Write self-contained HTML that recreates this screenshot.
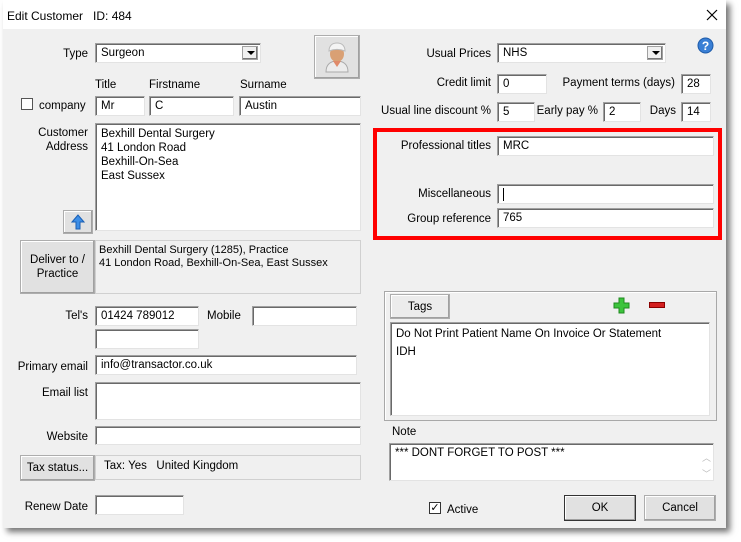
<!DOCTYPE html>
<html><head><meta charset="utf-8"><style>
*{box-sizing:border-box;margin:0;padding:0}
body{width:741px;height:542px;background:#fff;position:relative;overflow:hidden;font-family:"Liberation Sans",sans-serif;font-size:11.5px;color:#000}
.win{position:absolute;left:3px;top:0;width:723px;height:528px;background:#f0f0f0;box-shadow:4px 4px 6px rgba(0,0,0,.55)}
.tb{position:absolute;left:3px;top:0;width:723px;height:29px;background:#fff}
.a{position:absolute;white-space:nowrap}
.l{margin-top:2px}
.r{text-align:right}
.in{position:absolute;background:#fff;border:1px solid #a0a0a0;border-right-color:#e3e3e3;border-bottom-color:#e3e3e3;box-shadow:inset 1px 1px 0 #696969;padding:3px 5px 0;white-space:nowrap}
.btn{position:absolute;background:#e1e1e1;border:1px solid #adadad;box-shadow:inset -1px -1px 0 #a0a0a0,inset 1px 1px 0 #fff;text-align:center;display:flex;align-items:center;justify-content:center}
.gb{position:absolute;background:#f0f0f0;border:1px solid #d0d0d0}
.dd{position:absolute;right:2px;top:2px;width:16px;height:14px;background:#f0f0f0;border:1px solid #a0a0a0;box-shadow:inset -1px -1px 0 #777}
.dd:after{content:"";position:absolute;left:4px;top:4px;border-left:4px solid transparent;border-right:4px solid transparent;border-top:4px solid #000}
.cb{position:absolute;width:12px;height:12px;background:#fff;border:1px solid #333}
</style></head><body>
<div class="win"></div>
<div class="tb"></div>
<div class="a" style="left:7px;top:9px;font-size:12px">Edit Customer&nbsp;&nbsp;&nbsp;ID: 484</div>
<svg class="a" style="left:706px;top:9px" width="12" height="12" viewBox="0 0 12 12"><path d="M1 1L11 11M11 1L1 11" stroke="#000" stroke-width="1.2"/></svg>

<!-- left -->
<div class="a r l" style="left:30px;width:58px;top:46px">Type</div>
<div class="in" style="left:95px;top:43px;width:166px;height:20px">Surgeon<div class="dd"></div></div>
<div class="btn" style="left:314px;top:35px;width:46px;height:44px">
<svg width="30" height="32" viewBox="0 0 30 32"><path d="M4 31c0-8 5-11 11-11s11 3 11 11z" fill="#ececec" stroke="#aaa"/><ellipse cx="15" cy="13" rx="7" ry="8" fill="#d9a074"/><path d="M7 10c0-6 4-8 8-8s8 2 8 8c-5-2-11-2-16 0z" fill="#f4f4f4" stroke="#bbb"/><path d="M11 20l4 6 4-6" fill="#e08a6a"/></svg></div>
<div class="a l" style="left:95px;top:77px">Title</div>
<div class="a l" style="left:149px;top:77px">Firstname</div>
<div class="a l" style="left:240px;top:77px">Surname</div>
<div class="cb" style="left:21px;top:98px;border-color:#555"></div>
<div class="a l" style="left:39px;top:98px">company</div>
<div class="in" style="left:95px;top:96px;width:50px;height:20px">Mr</div>
<div class="in" style="left:149px;top:96px;width:85px;height:20px">C</div>
<div class="in" style="left:239px;top:96px;width:122px;height:20px">Austin</div>
<div class="a r l" style="left:20px;width:68px;top:124px;line-height:14px">Customer<br>Address</div>
<div class="in" style="left:95px;top:123px;width:266px;height:108px;line-height:14px;padding-top:3px">Bexhill Dental Surgery<br>41 London Road<br>Bexhill-On-Sea<br>East Sussex</div>
<div class="btn" style="left:63px;top:210px;width:30px;height:24px"><svg width="14" height="16" viewBox="0 0 14 16"><path d="M7 1L1 8h4v7h4V8h4z" fill="#3d8ee6" stroke="#1a5fb4"/></svg></div>
<div class="btn" style="left:20px;top:240px;width:75px;height:54px;line-height:14px">Deliver to /<br>Practice</div>
<div class="gb" style="left:95px;top:240px;width:266px;height:54px;padding:3px 3px;line-height:13px;font-size:11px">Bexhill Dental Surgery (1285), Practice<br>41 London Road, Bexhill-On-Sea, East Sussex</div>
<div class="a r l" style="left:20px;width:68px;top:308px">Tel's</div>
<div class="in" style="left:95px;top:306px;width:104px;height:20px">01424 789012</div>
<div class="a l" style="left:207px;top:308px">Mobile</div>
<div class="in" style="left:252px;top:306px;width:105px;height:20px"></div>
<div class="in" style="left:95px;top:329px;width:104px;height:20px"></div>
<div class="a r l" style="left:5px;width:83px;top:359px">Primary email</div>
<div class="in" style="left:95px;top:355px;width:262px;height:20px">info@transactor.co.uk</div>
<div class="a r l" style="left:20px;width:68px;top:385px">Email list</div>
<div class="in" style="left:95px;top:382px;width:266px;height:38px"></div>
<div class="a r l" style="left:20px;width:68px;top:429px">Website</div>
<div class="in" style="left:95px;top:426px;width:266px;height:19px"></div>
<div class="btn" style="left:20px;top:455px;width:75px;height:26px">Tax status...</div>
<div class="gb" style="left:95px;top:455px;width:266px;height:25px;padding:4px 8px">Tax: Yes&nbsp;&nbsp;&nbsp;United Kingdom</div>
<div class="a r l" style="left:10px;width:78px;top:499px">Renew Date</div>
<div class="in" style="left:95px;top:495px;width:89px;height:20px"></div>

<!-- right -->
<div class="a r l" style="left:380px;width:111px;top:46px">Usual Prices</div>
<div class="in" style="left:497px;top:43px;width:169px;height:20px">NHS<div class="dd"></div></div>
<svg class="a" style="left:697px;top:37px" width="17" height="17" viewBox="0 0 17 17"><circle cx="8.5" cy="8.5" r="7.5" fill="#3a7fd5" stroke="#1d5aa8"/><text x="8.5" y="13" text-anchor="middle" font-family="Liberation Sans" font-weight="bold" font-size="12" fill="#fff">?</text></svg>
<div class="a r l" style="left:380px;width:111px;top:75px">Credit limit</div>
<div class="in" style="left:497px;top:74px;width:50px;height:20px">0</div>
<div class="a r l" style="left:550px;width:125px;top:75px">Payment terms (days)</div>
<div class="in" style="left:681px;top:74px;width:30px;height:20px">28</div>
<div class="a r l" style="left:360px;width:131px;top:103px">Usual line discount %</div>
<div class="in" style="left:497px;top:102px;width:38px;height:20px">5</div>
<div class="a r l" style="left:530px;width:68px;top:103px">Early pay %</div>
<div class="in" style="left:603px;top:102px;width:38px;height:20px">2</div>
<div class="a r l" style="left:640px;width:36px;top:103px">Days</div>
<div class="in" style="left:681px;top:102px;width:30px;height:20px">14</div>

<div class="a" style="left:373px;top:128px;width:349px;height:112px;border:4px solid #f00"></div>
<div class="a r l" style="left:380px;width:111px;top:138px">Professional titles</div>
<div class="in" style="left:497px;top:136px;width:217px;height:20px">MRC</div>
<div class="a r l" style="left:380px;width:111px;top:186px">Miscellaneous</div>
<div class="in" style="left:497px;top:184px;width:217px;height:20px"><span style="display:inline-block;width:1px;height:13px;background:#000"></span></div>
<div class="a r l" style="left:380px;width:111px;top:211px">Group reference</div>
<div class="in" style="left:497px;top:208px;width:217px;height:20px">765</div>

<div class="a" style="left:384px;top:291px;width:333px;height:130px;border:1px solid #a8a8a8;box-shadow:inset 1px 1px 0 #fff"></div>
<div class="btn" style="left:390px;top:294px;width:60px;height:25px;background:#ececec">Tags</div>
<svg class="a" style="left:613px;top:297px" width="17" height="17" viewBox="0 0 17 17"><path d="M6 1h5v5h5v5h-5v5H6v-5H1V6h5z" fill="#3cc43c" stroke="#1f8a1f"/></svg>
<div class="a" style="left:649px;top:302px;width:16px;height:6px;background:#d42020;border:1px solid #8a0000"></div>
<div class="in" style="left:390px;top:322px;width:320px;height:94px;line-height:18px;padding-top:2px">Do Not Print Patient Name On Invoice Or Statement<br>IDH</div>
<div class="a l" style="left:392px;top:424px">Note</div>
<div class="in" style="left:389px;top:443px;width:325px;height:38px;padding-top:3px">*** DONT FORGET TO POST ***
<div style="position:absolute;right:2px;top:6px;color:#bbb;font-size:9px;line-height:16px">︿<br>﹀</div></div>
<div class="cb" style="left:429px;top:502px;font-size:11px;line-height:10px;text-align:center">✓</div>
<div class="a l" style="left:447px;top:502px">Active</div>
<div class="btn" style="left:564px;top:495px;width:72px;height:26px;border-color:#333">OK</div>
<div class="btn" style="left:644px;top:495px;width:72px;height:26px">Cancel</div>
</body></html>
